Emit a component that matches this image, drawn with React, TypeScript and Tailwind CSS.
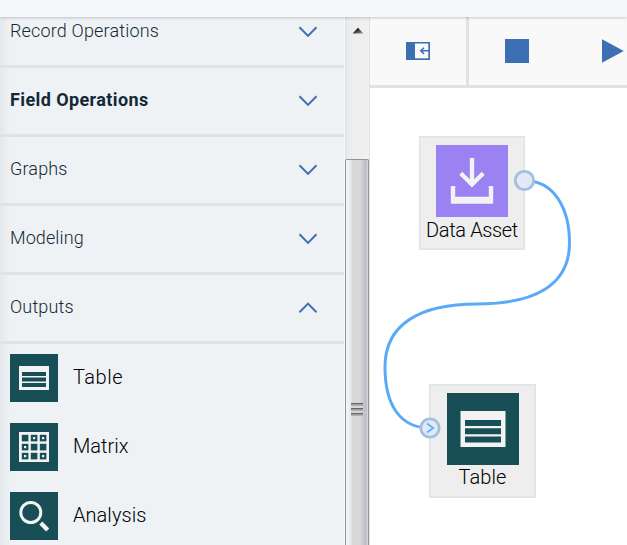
import React from "react";

function Chevron({ up = false }: { up?: boolean }) {
  return (
    <svg width="20" height="12" viewBox="0 0 20 12" fill="none" stroke="#3d70b2" strokeWidth="2">
      <path d={up ? "M1.5 10.3 10 1.6 18.5 10.3" : "M1.5 1.2 10 9.9 18.5 1.2"} />
    </svg>
  );
}

function TableGlyph() {
  return (
    <svg viewBox="0 0 48 48" className="h-full w-full">
      <path fill="#f3f3f3" d="M9 12h30v24H9z" />
      <path fill="#184e56" d="M12 18h24v4H12zM12 23.5h24v4H12zM12 29h24v4H12z" />
    </svg>
  );
}

function MatrixGlyph() {
  const cells = [0, 1, 2, 3, 4, 5, 6, 7, 8];
  const dotted = [1, 2, 3, 6, 8];
  return (
    <svg viewBox="0 0 48 48" className="h-full w-full">
      <path fill="#f3f3f3" d="M9 9h30v30H9z" />
      {cells.map((i) => {
        const x = 11.8 + (i % 3) * 9;
        const y = 11.8 + Math.floor(i / 3) * 9;
        return (
          <g key={i}>
            <rect x={x} y={y} width="6.6" height="6.6" fill="#184e56" />
            {dotted.includes(i) && <rect x={x + 2.2} y={y + 2.2} width="2.2" height="2.2" fill="#f3f3f3" />}
          </g>
        );
      })}
    </svg>
  );
}

function AnalysisGlyph() {
  return (
    <svg viewBox="0 0 48 48" className="h-full w-full" fill="none" stroke="#f3f3f3">
      <circle cx="20.8" cy="20.5" r="10" strokeWidth="3" />
      <path d="M30.8 31 37.7 38" strokeWidth="4.4" />
    </svg>
  );
}

function DownloadGlyph() {
  return (
    <svg viewBox="0 0 72 72" className="h-full w-full" fill="none" stroke="#f3f3f3">
      <path d="M36 13V39.5" strokeWidth="4.4" />
      <path d="M24.8 28.3 36 39.5 47.2 28.3" strokeWidth="4.4" />
      <path d="M17 41V55H55V41" strokeWidth="4.4" />
      <path d="M15 55.2H57" strokeWidth="7" />
    </svg>
  );
}

const sections = [
  { label: "Field Operations", cls: "font-bold text-[#152935] tracking-[0.4px]" },
  { label: "Graphs", cls: "font-light text-[#152935] tracking-[0.15px]" },
  { label: "Modeling", cls: "font-light text-[#152935] tracking-[0.1px]" },
  { label: "Outputs", cls: "font-light text-[#152935] tracking-[0.15px]", open: true },
];

const outputs = [
  { label: "Table", icon: <TableGlyph />, cls: "tracking-[0.5px]" },
  { label: "Matrix", icon: <MatrixGlyph />, cls: "tracking-[0px]" },
  { label: "Analysis", icon: <AnalysisGlyph />, cls: "tracking-[0.05px]" },
];

function Sidebar() {
  return (
    <aside className="w-[344px] shrink-0 bg-[linear-gradient(to_right,#e4e8eb_0,#eef2f5_10px)]">
      <div className="flex h-[51px] items-start justify-between border-b-[3px] border-[#dfe3e6] pl-[10px] pr-[26px]">
        <span className="pt-[2px] text-[18px] leading-6 font-light tracking-[0.17px] text-[#152935]">Record Operations</span>
        <span className="pt-[9px]"><Chevron /></span>
      </div>
      {sections.map((s) => (
        <div key={s.label} className="flex h-[69px] items-center justify-between border-b-[3px] border-[#dfe3e6] pl-[10px] pr-[26px]">
          <span className={"pb-[2px] text-[18px] leading-6 " + s.cls}>{s.label}</span>
          <Chevron up={s.open} />
        </div>
      ))}
      <div className="flex flex-col gap-[21px] pt-[10px] pl-[10px]">
        {outputs.map((o) => (
          <div key={o.label} className="flex h-12 items-center gap-[15px]">
            <span className="block size-12 bg-[#184e56]">{o.icon}</span>
            <span className={"pb-[3px] text-[20px] leading-7 font-light text-black " + o.cls}>{o.label}</span>
          </div>
        ))}
      </div>
    </aside>
  );
}

function Scrollbar() {
  return (
    <div className="flex w-[26px] shrink-0 flex-col border-l border-[#f8f9fa] border-r border-r-[#e3e3e3] bg-[linear-gradient(to_right,#dfdfdf_0,#ededed_3px,#f0f0f0_100%)]">
      <div className="flex h-[142px] justify-center pt-[10px] pl-[2px]">
        <svg width="12" height="7" viewBox="0 0 12 7">
          <defs>
            <linearGradient id="arrow" x1="0" y1="0" x2="1" y2="1">
              <stop offset="0.3" stopColor="#111" />
              <stop offset="1" stopColor="#aaa" />
            </linearGradient>
          </defs>
          <path d="M6 .8 11.4 6.6H.6z" fill="url(#arrow)" />
        </svg>
      </div>
      <div className="flex grow justify-center rounded-t-[2px] border border-b-0 border-[#949497] bg-[linear-gradient(to_right,#f5f5f5_0,#e9e9eb_5px,#d7d8da_6px,#d7d8da_14px,#c5c4cc_18px,#bbb9c4_20px,#dddde0_22px)]">
        <div className="mt-[243px] mr-px flex flex-col gap-px">
          {[0, 1, 2].map((i) => (
            <span key={i} className="block h-[4px] w-3 border-t border-[#666] bg-[linear-gradient(#999,#b5b5b5_2px,#f5f5f5_3px)]" />
          ))}
        </div>
      </div>
    </div>
  );
}

function Toolbar() {
  return (
    <div className="flex h-[71px] shrink-0 border-b-[3px] border-[#dfe3e6] bg-[#f9f9f9]">
      <div className="flex w-[99px] items-center border-r-[3px] border-[#dfe3e6] pl-9">
        <svg width="24" height="18" viewBox="0 0 24 18">
          <path fill="#3d70b2" d="M0 0h24v18H0z" />
          <path fill="#fafafa" d="M9 1.5h13.3v14.8H9z" />
          <path d="M23 8.8H14.5M18 5.7 14.8 8.8 18 11.9" fill="none" stroke="#3d70b2" strokeWidth="1.6" />
        </svg>
      </div>
      <div className="flex items-center gap-[73px] pl-9">
        <span className="block size-6 bg-[#3d70b2]" />
        <svg width="22" height="24" viewBox="0 0 22 24"><path d="M0 .2 21.8 12 0 23.8z" fill="#3d70b2" /></svg>
      </div>
    </div>
  );
}

function Canvas() {
  return (
    <div className="relative grow overflow-hidden bg-white">
      <div className="absolute left-[49px] top-[48px] flex h-[114px] w-[106px] flex-col items-center border border-[#dfe3e6] bg-[#eee] pt-2 shadow-[inset_0_0_0_1px_#e6e9eb]">
        <span className="block size-[72px] shrink-0 bg-[#9b82f3]"><DownloadGlyph /></span>
        <span className="text-[20px] leading-[26px] font-light tracking-[-0.35px] whitespace-nowrap text-black">Data Asset</span>
      </div>
      <div className="absolute left-[59px] top-[296px] flex h-[114px] w-[107px] flex-col items-center border border-[#dfe3e6] bg-[#eee] pt-2 shadow-[inset_0_0_0_1px_#e6e9eb]">
        <span className="block size-[72px] shrink-0 bg-[#184e56]"><TableGlyph /></span>
        <span className="text-[20px] leading-6 font-light tracking-[0.1px] text-black">Table</span>
      </div>
      <svg width="257" height="457" viewBox="370 88 257 457" className="absolute left-0 top-0" fill="none">
        <path d="M524 180.5C554 180.5 569.5 208 569.5 243C569.5 285 535 304 477 304C420 304 385 324 385 367C385 405 400 428 430 428" stroke="#5aaafa" strokeWidth="3" />
        <circle cx="524.5" cy="180.5" r="9.2" fill="#e2e9f6" stroke="#a4bde0" strokeWidth="2.8" />
        <circle cx="430" cy="428" r="9.2" fill="#e2e9f6" stroke="#a4bde0" strokeWidth="2.8" />
        <path d="M427 423.5 433.3 428 427 432.5" stroke="#5aaafa" strokeWidth="1.6" />
      </svg>
    </div>
  );
}

export default function App() {
  return (
    <div className="flex h-[545px] w-[627px] flex-col overflow-hidden bg-white font-['Roboto','Liberation_Sans',sans-serif]">
      <header className="z-10 h-[17px] shrink-0 bg-[#f5f7fb] shadow-[0_1px_3px_rgba(0,0,0,0.2)]" />
      <div className="flex min-h-0 grow">
        <Sidebar />
        <Scrollbar />
        <main className="flex min-w-0 grow flex-col">
          <Toolbar />
          <Canvas />
        </main>
      </div>
    </div>
  );
}
